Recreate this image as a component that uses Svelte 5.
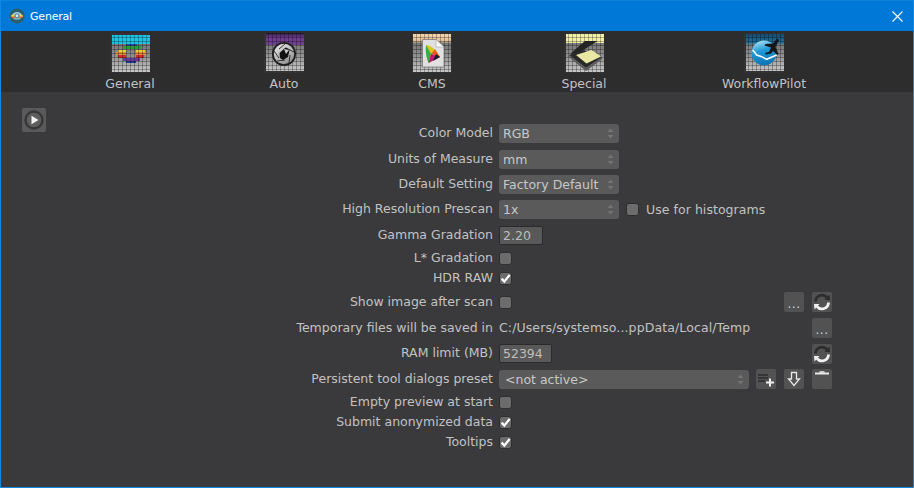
<script>
  const tabs = ['General', 'Auto', 'CMS', 'Special', 'WorkflowPilot'];
</script>

{#snippet refresh()}
  <svg class="ico" viewBox="0 0 20 20">
    <path d="M3.5 9.5 A6.5 6.5 0 0 1 15 5.5" fill="none" stroke="#2c2c2c" stroke-width="2.8"/>
    <path d="M12.5 8 L18 8 L17.5 2.5 Z" fill="#2c2c2c"/>
    <path d="M16.5 10.5 A6.5 6.5 0 0 1 5 14.5" fill="none" stroke="#f0f0f0" stroke-width="2.8"/>
    <path d="M7.5 12 L2 12 L2.5 17.5 Z" fill="#f0f0f0"/>
  </svg>
{/snippet}

{#snippet dots()}
  <button class="btn dots">...</button>
{/snippet}

{#snippet box(checked)}
  <span class="box">
    {#if checked}
      <svg viewBox="0 0 13 13"><path d="M2.6 6.6 L5.4 9.6 L10.6 3" fill="none" stroke="#fff" stroke-width="2.3"/></svg>
    {/if}
  </span>
{/snippet}

{#snippet sel(text)}
  <span class="select">
    <span>{text}</span>
    <svg class="updown" viewBox="0 0 7 11"><path d="M3.5 0.5 L6.5 4 L0.5 4 Z M3.5 10.5 L6.5 7 L0.5 7 Z" fill="#747474"/></svg>
  </span>
{/snippet}

<div class="window">
  <header class="title">
    <svg class="appicon" viewBox="0 0 16 16">
      <circle cx="8" cy="8" r="7.6" fill="#2b5f6d"/>
      <path d="M1.5 8 Q8 1 14.5 8 Q8 15 1.5 8 Z" fill="#f0d24a"/>
      <path d="M3.2 6.4 Q8 1.8 12.8 6.4 Z" fill="#9fd0e8"/>
      <path d="M2 8.4 H14 Q13.4 9.2 12.6 9.9 H3.4 Q2.6 9.2 2 8.4 Z" fill="#e8692f"/>
      <path d="M4 10.4 H12 Q8 13.4 4 10.4 Z" fill="#4aa3c7"/>
      <circle cx="8" cy="7.8" r="2.6" fill="#5f8fb0"/>
      <circle cx="8" cy="7.8" r="1.2" fill="#e6f2f7"/>
    </svg>
    <span class="title-text">General</span>
    <svg class="close" viewBox="0 0 11 11"><path d="M0.5 0.5 L10.5 10.5 M10.5 0.5 L0.5 10.5" stroke="#fff" stroke-width="1.1"/></svg>
  </header>

  <svg class="defs" aria-hidden="true">
    <defs>
      <linearGradient id="body" x1="0" y1="0" x2="0" y2="1">
        <stop offset="0.15" stop-color="#707070"/><stop offset="0.55" stop-color="#8e8e8e"/><stop offset="1" stop-color="#c8c8c8"/>
      </linearGradient>
      <linearGradient id="purple" x1="0" y1="0" x2="0" y2="1">
        <stop offset="0" stop-color="#2c1f38"/><stop offset="0.35" stop-color="#6e3a90"/><stop offset="1" stop-color="#6e3a90" stop-opacity="0.85"/>
      </linearGradient>
      <linearGradient id="peach" x1="0" y1="0" x2="0" y2="1">
        <stop offset="0" stop-color="#f4d6ae"/><stop offset="0.7" stop-color="#e8c49a"/><stop offset="1" stop-color="#c0a890" stop-opacity="0.6"/>
      </linearGradient>
      <linearGradient id="wpband" x1="0" y1="0" x2="0" y2="1">
        <stop offset="0" stop-color="#1a4a6e"/><stop offset="0.7" stop-color="#1f6f98"/><stop offset="1" stop-color="#4c7f98" stop-opacity="0"/>
      </linearGradient>
      <pattern id="grid" width="4" height="4" patternUnits="userSpaceOnUse">
        <path d="M0 0.5 H4 M0.5 0 V4" stroke="#000" stroke-opacity="0.28" stroke-width="1"/>
      </pattern>
      <linearGradient id="globe" x1="0.3" y1="0" x2="0.6" y2="1">
        <stop offset="0" stop-color="#a8e0f6"/><stop offset="0.4" stop-color="#1f9ad6"/><stop offset="1" stop-color="#0a70b2"/>
      </linearGradient>
      <linearGradient id="disc" x1="0.2" y1="0" x2="0.8" y2="1">
        <stop offset="0" stop-color="#e6e6e6"/><stop offset="1" stop-color="#8c8c8c"/>
      </linearGradient>
    </defs>
  </svg>

  <nav class="tabs">
    {#each tabs as t}
      <div class="tab">
        <svg class="tile" viewBox="0 0 40 40">
          <rect x="0" y="0" width="40" height="40" fill="#323232"/>
          {#if t === 'General'}
            <rect x="2" y="2" width="38" height="37" fill="url(#body)"/>
            <rect x="2" y="2" width="38" height="9" fill="#19c6e0"/>
            <g>
              <rect x="16" y="11" width="11" height="2" fill="#1f4fa8"/>
              <rect x="13" y="13" width="18" height="3" fill="#2f9a3a"/>
              <rect x="8" y="17" width="8" height="2" fill="#e8cf30"/>
              <rect x="26" y="17" width="9" height="2" fill="#e8cf30"/>
              <rect x="6" y="19" width="10" height="3" fill="#e88f30"/>
              <rect x="26" y="19" width="10" height="3" fill="#e88f30"/>
              <rect x="8" y="22" width="8" height="3" fill="#d82a2a"/>
              <rect x="26" y="22" width="8" height="3" fill="#d82a2a"/>
              <rect x="13" y="25" width="17" height="3" fill="#6a3a9a"/>
              <rect x="16" y="28" width="10" height="2" fill="#1f3f98"/>
            </g>
            <rect x="2" y="2" width="38" height="37" fill="url(#grid)"/>
          {:else if t === 'Auto'}
            <rect x="2" y="0" width="38" height="38" fill="url(#body)"/>
            <rect x="2" y="0" width="38" height="12" fill="url(#purple)"/>
            <rect x="2" y="0" width="38" height="38" fill="url(#grid)"/>
            <circle cx="20" cy="21" r="12" fill="#1e1e1e"/>
            <circle cx="20" cy="21" r="10.2" fill="url(#disc)"/>
            <g stroke="#222" stroke-width="0.9" fill="none">
              <path d="M15 16 L21 11"/><path d="M22 15 L30 19"/><path d="M26 22 L25 30"/><path d="M21 27 L13 28"/><path d="M15 25 L10 18"/>
            </g>
            <path d="M15.5 20 L21.5 14.5 L25.5 17 L24 24 L19 27 L16 25 Z" fill="#111"/>
            <path d="M20 16 L25 17 L22 21 Z" fill="#c8c8c8"/>
          {:else if t === 'CMS'}
            <rect x="1" y="1" width="38" height="38" fill="url(#body)"/>
            <rect x="1" y="1" width="38" height="9" fill="url(#peach)"/>
            <rect x="1" y="1" width="38" height="38" fill="url(#grid)"/>
            <path d="M10.5 6.5 H24 L32 14 V34 H10.5 Z" fill="#e0e0e0" stroke="#707070" stroke-width="0.7"/>
            <path d="M24 6.5 L32 14 H24 Z" fill="#f6f6f6" stroke="#999" stroke-width="0.5"/>
            <path d="M14 12 Q21 12 28 24 L16.5 30 Q13 21 14 12 Z" fill="#d8c820"/>
            <path d="M14 12 Q13 21 16.5 30 L19 21 Z" fill="#2fae4a"/>
            <path d="M19 21 L28 24 L23 16 Z" fill="#ea5a20"/>
            <path d="M19 21 L28 24 L16.5 30 Z" fill="#b81878"/>
            <path d="M24 21 L28 24 L21 28 Z" fill="#1c1c30"/>
          {:else if t === 'Special'}
            <rect x="2" y="1" width="38" height="38" fill="url(#body)"/>
            <rect x="2" y="1" width="38" height="9" fill="#f2f0a8"/>
            <rect x="2" y="1" width="38" height="38" fill="url(#grid)"/>
            <path d="M6.5 20.5 L21 8 L33.5 8 L14 20.5 Z" fill="#232323"/>
            <path d="M5 22 L19 17 L38 24 L22 35 Z" fill="#2a2a2a"/>
            <path d="M12 22 L27.5 17 L37 23.5 L22.5 30.5 Z" fill="#e9e7a4"/>
            <path d="M5 22 L22 35 L38 24 L38 26 L22 38 L5 24 Z" fill="#5a5a5a"/>
          {:else}
            <rect x="2" y="1" width="38" height="37" fill="url(#body)"/>
            <rect x="2" y="1" width="38" height="12" fill="url(#wpband)"/>
            <rect x="2" y="1" width="38" height="37" fill="url(#grid)"/>
            <circle cx="20" cy="20" r="12.5" fill="url(#globe)"/>
            <path d="M8.7 17 L12.7 22 L17.7 23.7 L22.7 26.3 L32.7 22" fill="none" stroke="#fff" stroke-width="1.5"/>
            <path d="M33 5.5 L29 10.5 L21.5 11 L20.5 12.5 L27 14.5 L25 19 L21 20 L22 21.5 L27 20.5 L29 18 L33.5 22 L34.5 21 L31.5 14 L35 7 Z" fill="#15151a"/>
          {/if}
        </svg>
        <span class="tab-label">{t}</span>
      </div>
    {/each}
  </nav>

  <main class="content">
    <div class="side">
      <button class="btn play" aria-label="play">
        <svg viewBox="0 0 24 24">
          <circle cx="12" cy="12" r="8.5" fill="#5e5e5e" stroke="#363636" stroke-width="2.4"/>
          <path d="M9.5 7.8 L16.5 12 L9.5 16.2 Z" fill="#f2f2f2"/>
        </svg>
      </button>
    </div>

    <div class="form">
      <span class="label">Color Model</span>
      <div class="main">{@render sel('RGB')}</div>
      <div class="actions"></div>

      <span class="label">Units of Measure</span>
      <div class="main">{@render sel('mm')}</div>
      <div class="actions"></div>

      <span class="label">Default Setting</span>
      <div class="main">{@render sel('Factory Default')}</div>
      <div class="actions"></div>

      <span class="label">High Resolution Prescan</span>
      <div class="main">{@render sel('1x')}{@render box(false)}<span class="after">Use for histograms</span></div>
      <div class="actions"></div>

      <span class="label">Gamma Gradation</span>
      <div class="main"><span class="input gamma">2.20</span></div>
      <div class="actions"></div>

      <span class="label">L* Gradation</span>
      <div class="main">{@render box(false)}</div>
      <div class="actions"></div>

      <span class="label">HDR RAW</span>
      <div class="main">{@render box(true)}</div>
      <div class="actions"></div>

      <span class="label">Show image after scan</span>
      <div class="main">{@render box(false)}</div>
      <div class="actions">{@render dots()}<button class="btn" aria-label="reset">{@render refresh()}</button></div>

      <span class="label">Temporary files will be saved in</span>
      <div class="main"><span class="path">C:/Users/systemso...ppData/Local/Temp</span></div>
      <div class="actions">{@render dots()}</div>

      <span class="label">RAM limit (MB)</span>
      <div class="main"><span class="input ram">52394</span></div>
      <div class="actions"><button class="btn" aria-label="reset">{@render refresh()}</button></div>

      <span class="label">Persistent tool dialogs preset</span>
      <div class="main"><span class="wide">{@render sel('<not active>')}</span></div>
      <div class="actions">
        <button class="btn" aria-label="add">
          <svg class="ico" viewBox="0 0 20 20">
            <path d="M2 6 H12 M2 9 H12 M2 12 H9" stroke="#2c2c2c" stroke-width="1.6"/>
            <path d="M14 9.5 V17.5 M10 13.5 H18" stroke="#f0f0f0" stroke-width="2"/>
          </svg>
        </button>
        <button class="btn" aria-label="down">
          <svg class="ico" viewBox="0 0 20 20">
            <path d="M7.5 3.5 H12.5 V10 H15.5 L10 16.5 L4.5 10 H7.5 Z" fill="none" stroke="#e8e8e8" stroke-width="1.3"/>
          </svg>
        </button>
        <button class="btn" aria-label="delete">
          <svg class="ico" viewBox="0 0 20 20">
            <path d="M3 4.5 H17" stroke="#e8e8e8" stroke-width="2"/>
            <path d="M7.5 3 H12.5" stroke="#e8e8e8" stroke-width="1.6"/>
          </svg>
        </button>
      </div>

      <span class="label">Empty preview at start</span>
      <div class="main">{@render box(false)}</div>
      <div class="actions"></div>

      <span class="label">Submit anonymized data</span>
      <div class="main">{@render box(true)}</div>
      <div class="actions"></div>

      <span class="label">Tooltips</span>
      <div class="main">{@render box(true)}</div>
      <div class="actions"></div>
    </div>
  </main>
</div>

<style>
  :global(body) { margin: 0; background: #3a3a3c; }
  .window {
    width: 914px;
    height: 488px;
    box-sizing: border-box;
    border: 1px solid #1088e4;
    border-top-color: #0f82dc;
    display: flex;
    flex-direction: column;
    overflow: hidden;
    background: #3a3a3c;
    font-family: "DejaVu Sans", sans-serif;
    font-size: 12.5px;
    color: #c2c2c2;
  }
  .title {
    height: 30px;
    flex: none;
    background: #0078d7;
    display: flex;
    align-items: center;
    padding: 0 10px 0 8px;
    color: #fff;
  }
  .appicon { width: 16px; height: 16px; margin-right: 5px; }
  .title-text { flex: 1; font-size: 11px; letter-spacing: -0.2px; }
  .close { width: 11px; height: 11px; }
  .defs { width: 0; height: 0; display: block; }
  .tabs {
    height: 61px;
    flex: none;
    box-sizing: border-box;
    background: #2d2d2d;
    display: grid;
    grid-template-columns: 154px 154px 142px 162px 198px;
    padding-left: 52px;
    padding-top: 2px;
  }
  .tab { display: flex; flex-direction: column; align-items: center; }
  .tile { width: 40px; height: 40px; display: block; }
  .tab-label { line-height: 14px; margin-top: 4px; }
  .content { flex: 1; display: flex; min-height: 0; }
  .side { width: 45px; flex: none; padding: 16px 0 0 21px; box-sizing: border-box; }
  .form {
    margin-top: 28px;
    display: grid;
    grid-template-columns: 447px 250px 77px;
    column-gap: 6px;
    grid-template-rows: 26px 26px 25px 25px 26px 20px 21px 26px 26px 25px 26px 20px 20px 20px;
    align-items: center;
    align-content: start;
  }
  .label { text-align: right; white-space: nowrap; justify-self: end; margin-top: -2px; }
  .main { display: flex; align-items: center; white-space: nowrap; min-width: 0; }
  .path { margin-top: -2px; letter-spacing: 0.11px; }
  .actions { display: flex; justify-content: flex-end; gap: 8px; }
  .select {
    width: 120px;
    height: 19px;
    box-sizing: border-box;
    background: #5a5a5a;
    border-radius: 3px;
    display: flex;
    align-items: center;
    justify-content: space-between;
    padding: 0 5px 0 4px;
    flex: none;
    color: #c8c8c8;
  }
  .wide { width: 250px; display: block; }
  .wide .select { width: 250px; padding-left: 6px; }
  .updown { width: 7px; height: 11px; }
  .box {
    width: 13px;
    height: 13px;
    background: #6c6c6c;
    border: 1px solid #2e2e2e;
    border-radius: 3px;
    box-sizing: border-box;
    display: block;
    flex: none;
  }
  .box svg { width: 13px; height: 13px; display: block; margin: -1px; }
  .main > .select + .box { margin-left: 7px; }
  .after { margin-left: 7px; margin-top: -1px; letter-spacing: 0.05px; }
  .input {
    height: 19px;
    box-sizing: border-box;
    background: #595959;
    border: 1px solid #2b2b2b;
    border-radius: 2px;
    display: flex;
    align-items: center;
    padding-left: 3px;
    color: #bdbdbd;
  }
  .gamma { width: 44px; }
  .ram { width: 53px; }
  .btn {
    width: 20px;
    height: 20px;
    padding: 0;
    border: 0;
    background: #525252;
    border-radius: 2px;
    display: block;
    flex: none;
    font: inherit;
    color: #bfbfbf;
  }
  .dots { font-size: 12px; line-height: 20px; letter-spacing: 0.5px; color: #d4d4d4; padding-top: 2px; }
  .ico { width: 20px; height: 20px; display: block; }
  .play { width: 24px; height: 24px; background: #5a5a5a; }
  .play svg { width: 24px; height: 24px; display: block; }
</style>
